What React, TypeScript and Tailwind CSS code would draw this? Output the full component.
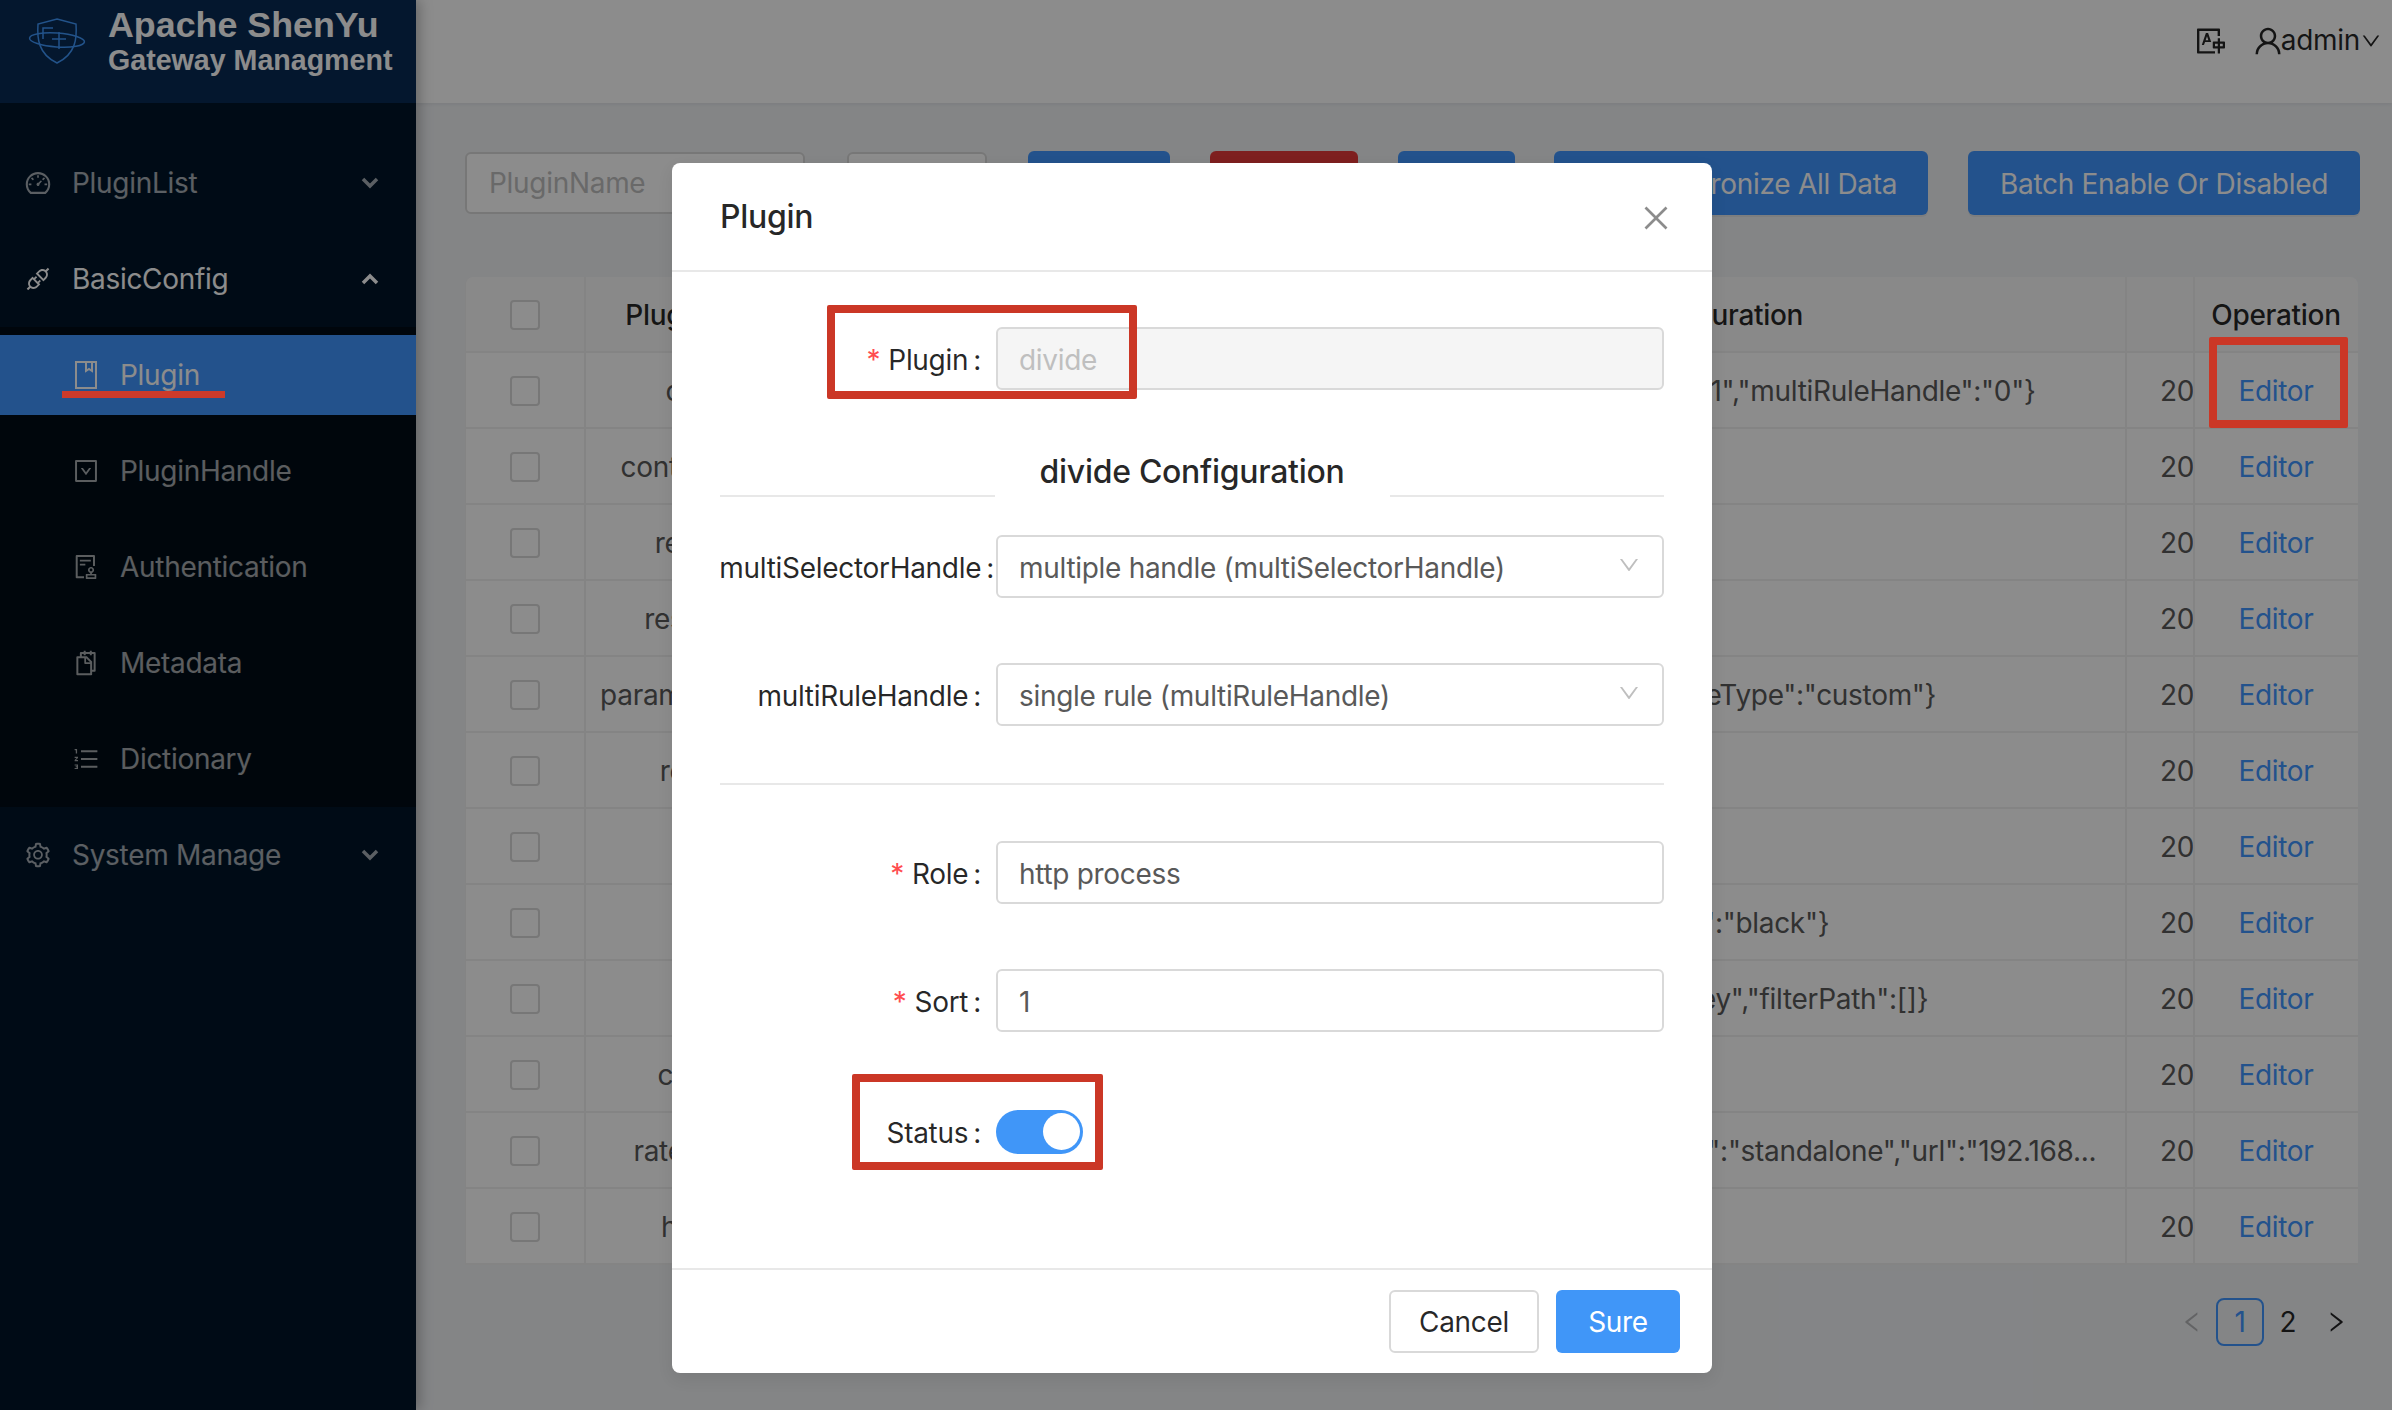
import type { ReactNode } from 'react';
import {
  AiOutlineApi,
  AiOutlineAudit,
  AiOutlineClose,
  AiOutlineDashboard,
  AiOutlineDown,
  AiOutlineDownSquare,
  AiOutlineLeft,
  AiOutlineOrderedList,
  AiOutlineReload,
  AiOutlineRight,
  AiOutlineSetting,
  AiOutlineSnippets,
  AiOutlineTranslation,
  AiOutlineUser,
} from 'react-icons/ai';

const plugins = [
  { name: 'divide', role: 'http process', config: '{"multiSelectorHandle":"1","multiRuleHandle":"0"}' },
  { name: 'context_path', role: 'http process', config: '' },
  { name: 'redirect', role: 'http process', config: '' },
  { name: 'response', role: 'http process', config: '' },
  { name: 'param_mapping', role: 'http process', config: '{"ruleHandlePageType":"custom"}' },
  { name: 'rewrite', role: 'http process', config: '' },
  { name: 'waf', role: 'authentication', config: '' },
  { name: 'sign', role: 'authentication', config: '{"model":"black"}' },
  { name: 'jwt', role: 'authentication', config: '{"secretKey":"key","filterPath":[]}' },
  { name: 'cryptor', role: 'cache', config: '' },
  { name: 'rate_limiter', role: 'fault tolerance', config: '{"master":"mymaster","mode":"standalone","url":"192.168...' },
  { name: 'hystrix', role: 'fault tolerance', config: '' },
];

function Chevron({ up = false, bright = false }: { up?: boolean; bright?: boolean }) {
  return (
    <svg width="20" height="12" viewBox="0 0 20 12" fill="none" className={bright ? 'text-white' : 'text-white/65'}>
      <path d={up ? 'M3 10l7-7 7 7' : 'M3 2l7 7 7-7'} stroke="currentColor" strokeWidth="3.5" />
    </svg>
  );
}

function Logo() {
  return (
    <svg width="58" height="46" viewBox="0 0 58 46" fill="none" stroke="#3f97fb" strokeWidth="1.5">
      <path d="M29 1l19 5c1 14 0 30-19 39C10 36 9 20 10 6z" />
      <ellipse cx="29" cy="22" rx="27.5" ry="7" transform="rotate(4 29 22)" />
      <path d="M15 21V10h10M24 21h14M31 14v17" />
    </svg>
  );
}

function BookIcon() {
  return (
    <svg width="22" height="28" viewBox="0 0 22 28" fill="none" stroke="currentColor" strokeWidth="2">
      <rect x="1" y="1" width="20" height="26" />
      <path d="M11 1v9l3-2 3 2V1" />
    </svg>
  );
}

function TopMenu({ icon, label, open = false, band = false }: { icon: ReactNode; label: string; open?: boolean; band?: boolean }) {
  return (
    <div className={`flex h-[96px] items-center pl-[24px] pr-[36px] ${band ? 'bg-[#001529]' : ''} ${open ? 'text-white' : 'text-white/65'}`}>
      <span className="flex w-[28px] justify-center text-[32px]">{icon}</span>
      <span className="ml-[20px] flex-1 text-[28px]">{label}</span>
      <Chevron up={open} bright={open} />
    </div>
  );
}

function SubMenu({ icon, label, active = false }: { icon: ReactNode; label: string; active?: boolean }) {
  return (
    <div className={`flex h-[80px] items-center pl-[72px] ${active ? 'bg-[#4096ff] text-white' : 'text-white/65'}`}>
      <span className="flex w-[28px] justify-center text-[30px]">{icon}</span>
      <span className="ml-[20px] text-[28px]">{label}</span>
    </div>
  );
}

function Sidebar() {
  return (
    <aside className="relative z-10 flex h-full w-[416px] shrink-0 flex-col bg-[#001529] shadow-[4px_0_12px_rgba(0,0,0,0.25)]">
      <div className="flex h-[103px] items-start bg-[#092a54] pl-[28px]">
        <div className="mt-[18px]">
          <Logo />
        </div>
        <div className="ml-[22px] pt-[2px] font-['Liberation_Sans',sans-serif] font-bold tracking-normal text-white">
          <div className="h-[46px] text-[35.8px] leading-[46px]">Apache ShenYu</div>
          <div className="mt-[-5px] text-[28.6px] leading-[34px]">Gateway Managment</div>
        </div>
      </div>
      <nav className="pt-[32px]">
        <TopMenu icon={<AiOutlineDashboard />} label="PluginList" />
        <TopMenu icon={<AiOutlineApi />} label="BasicConfig" open />
        <div className="bg-[#000c17] py-[8px]">
          <SubMenu icon={<BookIcon />} label="Plugin" active />
          <div className="h-[16px]" />
          <SubMenu icon={<AiOutlineDownSquare />} label="PluginHandle" />
          <div className="h-[16px]" />
          <SubMenu icon={<AiOutlineAudit />} label="Authentication" />
          <div className="h-[16px]" />
          <SubMenu icon={<AiOutlineSnippets />} label="Metadata" />
          <div className="h-[16px]" />
          <SubMenu icon={<AiOutlineOrderedList />} label="Dictionary" />
        </div>
        <TopMenu icon={<AiOutlineSetting />} label="System Manage" band />
      </nav>
    </aside>
  );
}

function ToolButton({ label, width, danger = false, icon }: { label: string; width: string; danger?: boolean; icon?: ReactNode }) {
  return (
    <button className={`flex h-[64px] items-center justify-center gap-[16px] rounded-[6px] pt-[1px] text-[28px] text-white shadow-[0_2px_0_rgba(0,0,0,0.05)] ${width} ${danger ? 'bg-[#e53a3a]' : 'bg-[#4096ff]'}`}>
      {icon}
      {label}
    </button>
  );
}

function PluginTable() {
  return (
    <div className="mt-[62px] w-[1893px] overflow-hidden rounded-t-[8px] border-l border-[#f0f0f0]">
      <table className="w-full table-fixed border-collapse text-[28px] text-[#595959]">
        <colgroup>
          <col className="w-[119px]" />
          <col className="w-[239px]" />
          <col className="w-[477px]" />
          <col className="w-[825px]" />
          <col className="w-[68px]" />
          <col className="w-[165px]" />
        </colgroup>
        <thead>
          <tr className="h-[75px] bg-[#fafafa] text-[#000000d9]">
            <th className="border-r-2 border-b-2 border-[#f0f0f0] pt-[2px]">
              <span className="mx-auto block size-[30px] rounded-[4px] border-2 border-[#d9d9d9] bg-white" />
            </th>
            <th className="border-r-2 border-b-2 border-[#f0f0f0] pt-[2px] font-medium">PluginName</th>
            <th className="border-r-2 border-b-2 border-[#f0f0f0] pt-[2px] font-medium">Role</th>
            <th className="border-r-2 border-b-2 border-[#f0f0f0] pt-[2px] font-medium">Configuration</th>
            <th className="border-r-2 border-b-2 border-[#f0f0f0]" />
            <th className="relative border-b-2 border-[#f0f0f0] pt-[2px] pr-[2px] font-medium shadow-[-10px_0_10px_-4px_rgba(0,0,0,0.22)]">Operation</th>
          </tr>
        </thead>
        <tbody>
          {plugins.map((plugin) => (
            <tr key={plugin.name} className="h-[76px] bg-white">
              <td className="border-r-2 border-b-2 border-[#f0f0f0] pt-[2px]">
                <span className="mx-auto block size-[30px] rounded-[4px] border-2 border-[#d9d9d9]" />
              </td>
              <td className="border-r-2 border-b-2 border-[#f0f0f0] pt-[2px] text-center">{plugin.name}</td>
              <td className="border-r-2 border-b-2 border-[#f0f0f0] pt-[2px] text-center">{plugin.role}</td>
              <td className="truncate border-r-2 border-b-2 border-[#f0f0f0] px-[20px] pt-[2px] text-center">{plugin.config}</td>
              <td className="overflow-hidden border-r-2 border-b-2 border-[#f0f0f0] pt-[2px] pl-[33px] whitespace-nowrap">2022-05-25 18:02:53</td>
              <td className="relative border-b-2 border-[#f0f0f0] bg-white pt-[2px] pr-[2px] text-center text-[#4096ff] shadow-[-10px_0_10px_-4px_rgba(0,0,0,0.22)]">
                Editor
              </td>
            </tr>
          ))}
        </tbody>
      </table>
    </div>
  );
}

function Pagination() {
  return (
    <div className="mt-[33px] flex justify-end text-[28px] text-[#000000d9]">
      <span className="flex h-[48px] w-[48px] items-center justify-center text-[26px] text-[#00000040]">
        <AiOutlineLeft />
      </span>
      <span className="flex h-[48px] w-[48px] items-center justify-center rounded-[8px] border-2 border-[#4096ff] text-[#4096ff]">1</span>
      <span className="flex h-[48px] w-[48px] items-center justify-center">2</span>
      <span className="flex h-[48px] w-[48px] items-center justify-center text-[26px]">
        <AiOutlineRight />
      </span>
    </div>
  );
}

function Main() {
  return (
    <main className="flex h-full flex-1 flex-col bg-[#f0f2f5]">
      <header className="flex h-[103px] shrink-0 items-start justify-end bg-white pt-[24px] pr-[10px] text-[28px] text-[#000000d9] shadow-[0_1px_4px_rgba(0,21,41,0.08)]">
        <AiOutlineTranslation className="mt-[1px] text-[32px]" />
        <AiOutlineUser className="ml-[24px] text-[34px]" />
        <span className="ml-[-4px] leading-[32px]">admin</span>
        <AiOutlineDown className="mt-[6px] text-[22px]" />
      </header>
      <div className="pt-[48px] pr-[32px] pl-[49px]">
        <div className="flex items-center">
          <div className="flex h-[62px] w-[340px] items-center rounded-[6px] border-2 border-[#d9d9d9] bg-white px-[22px] text-[28px] text-[#bfbfbf]">PluginName</div>
          <div className="ml-[42px] h-[62px] w-[140px] rounded-[6px] border-2 border-[#d9d9d9] bg-white" />
          <div className="ml-[41px] flex flex-1 justify-between">
            <ToolButton label="Query" width="w-[142px]" />
            <ToolButton label="Delete" width="w-[148px]" danger />
            <ToolButton label="Add" width="w-[117px]" />
            <ToolButton label="Synchronize All Data" width="w-[374px]" icon={<AiOutlineReload />} />
            <ToolButton label="Batch Enable Or Disabled" width="w-[392px]" />
          </div>
        </div>
        <PluginTable />
        <Pagination />
      </div>
    </main>
  );
}

function Field({ label, required = false, tight = false, children }: { label: string; required?: boolean; tight?: boolean; children: ReactNode }) {
  return (
    <div className="flex items-center">
      <label className={`flex w-[276px] shrink-0 items-center justify-end pt-[3px] text-[28px] text-[#000000d9] ${tight ? 'pr-[2px]' : 'pr-[15px]'}`}>
        {required && <span className="mr-[8px] text-[#ff4d4f]">*</span>}
        <span>{label}</span>
        <span className="ml-[5px]">:</span>
      </label>
      {children}
    </div>
  );
}

function TextBox({ value, disabled = false, chevron = false }: { value: string; disabled?: boolean; chevron?: boolean }) {
  return (
    <div className={`flex h-[63px] flex-1 items-center justify-between rounded-[6px] border-2 border-[#d9d9d9] px-[21px] pt-[3px] text-[28px] ${disabled ? 'bg-[#f5f5f5] text-[#bfbfbf]' : 'bg-white text-[#595959]'}`}>
      <span>{value}</span>
      {chevron && <AiOutlineDown className="mb-[7px] text-[24px] text-[#bfbfbf]" />}
    </div>
  );
}

function PluginModal() {
  return (
    <div className="absolute inset-0 z-20 flex items-start justify-center bg-black/45 pt-[163px] pr-[8px]">
      <div className="h-[1210px] w-[1040px] rounded-[8px] bg-white shadow-[0_6px_16px_rgba(0,0,0,0.08)]">
        <div className="flex h-[109px] items-center justify-between border-b-2 border-[#e8e8e8] pr-[39px] pl-[48px]">
          <h2 className="text-[32px] leading-[40px] font-medium text-[#000000d9]">Plugin</h2>
          <AiOutlineClose className="mt-[3px] text-[34px] text-[#00000073]" />
        </div>
        <div className="h-[996px] px-[48px] pt-[55px]">
          <Field label="Plugin" required>
            <TextBox value="divide" disabled />
          </Field>
          <div className="mt-[62px] flex h-[45px] items-end">
            <div className="h-[2px] flex-1 bg-[#e8e8e8]" />
            <div className="h-[45px] w-[395px] text-center text-[32px] leading-[40px] font-medium text-[#000000d9]">divide Configuration</div>
            <div className="h-[2px] flex-1 bg-[#e8e8e8]" />
          </div>
          <div className="mt-[38px]">
            <Field label="multiSelectorHandle" tight>
              <TextBox value="multiple handle (multiSelectorHandle)" chevron />
            </Field>
          </div>
          <div className="mt-[65px]">
            <Field label="multiRuleHandle">
              <TextBox value="single rule (multiRuleHandle)" chevron />
            </Field>
          </div>
          <div className="mt-[57px] h-[2px] bg-[#e8e8e8]" />
          <div className="mt-[56px]">
            <Field label="Role" required>
              <TextBox value="http process" />
            </Field>
          </div>
          <div className="mt-[65px]">
            <Field label="Sort" required>
              <TextBox value="1" />
            </Field>
          </div>
          <div className="mt-[77px]">
            <Field label="Status">
              <div className="flex h-[44px] w-[87px] items-center justify-end rounded-full bg-[#4096f8] pr-[3px]">
                <span className="size-[37px] rounded-full bg-white" />
              </div>
            </Field>
          </div>
        </div>
        <div className="flex h-[105px] items-start justify-end gap-[17px] border-t-2 border-[#e8e8e8] pt-[20px] pr-[32px]">
          <button className="h-[63px] w-[150px] rounded-[6px] border-2 border-[#d9d9d9] bg-white text-[28px] text-[#000000d9]">Cancel</button>
          <button className="h-[63px] w-[124px] rounded-[6px] bg-[#4096f8] text-[28px] text-white">Sure</button>
        </div>
      </div>
    </div>
  );
}

export default function App() {
  return (
    <div className="relative flex h-[1410px] w-full overflow-hidden font-[Inter,sans-serif] tracking-[-0.3px]">
      <Sidebar />
      <Main />
      <PluginModal />
      {/* tutorial markup drawn over the screenshot */}
      <div className="absolute top-[391px] left-[62px] z-30 h-[7px] w-[163px] bg-[#cc3a2a]" />
      <div className="absolute top-[305px] left-[827px] z-30 h-[94px] w-[310px] rounded-[2px] border-[8px] border-[#cb3726]" />
      <div className="absolute top-[1074px] left-[852px] z-30 h-[96px] w-[251px] rounded-[2px] border-[8px] border-[#cb3726]" />
      <div className="absolute top-[337px] left-[2209px] z-30 h-[91px] w-[139px] rounded-[2px] border-[8px] border-[#cb3726]" />
    </div>
  );
}
